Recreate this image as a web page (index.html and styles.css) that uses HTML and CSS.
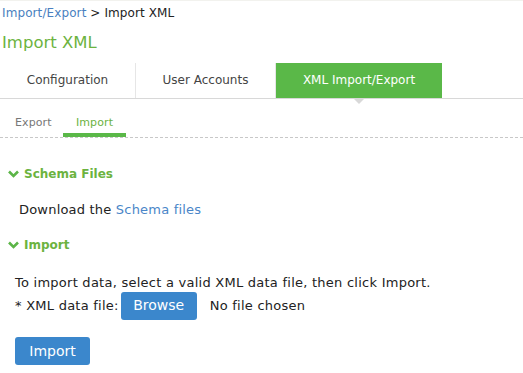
FILE: index.html
```html
<!DOCTYPE html>
<html>
<head>
<meta charset="utf-8">
<link rel="stylesheet" href="styles.css">
</head>
<body>
<div class="page">
  <div class="breadcrumb"><a class="crumb-link">Import/Export</a> &gt; Import XML</div>
  <h1 class="title">Import XML</h1>
  <div class="tabs">
    <div class="tab">Configuration</div>
    <div class="tab">User Accounts</div>
    <div class="tab active">XML Import/Export</div>
  </div>
  <div class="subtabs">
    <div class="subtab">Export</div>
    <div class="subtab active">Import</div>
  </div>
  <div class="section">
    <div class="section-head"><svg class="chev" width="11" height="8" viewBox="0 0 11 8"><path d="M1 1.5 L5.5 6 L10 1.5" fill="none" stroke="#5cb548" stroke-width="2.6"/></svg>Schema Files</div>
    <div class="section-body">Download the <a class="link">Schema files</a></div>
  </div>
  <div class="section">
    <div class="section-head second"><svg class="chev" width="11" height="8" viewBox="0 0 11 8"><path d="M1 1.5 L5.5 6 L10 1.5" fill="none" stroke="#5cb548" stroke-width="2.6"/></svg>Import</div>
    <div class="section-body import-body">
      <div class="para">To import data, select a valid XML data file, then click Import.</div>
      <div class="file-row"><span class="label">* XML data file:</span><span class="btn browse">Browse</span><span class="nofile">No file chosen</span></div>
      <div class="btn import">Import</div>
    </div>
  </div>
</div>
</body>
</html>
```

FILE: styles.css
```css
html, body { margin: 0; padding: 0; background: #fff; }
body { font-family: "DejaVu Sans", sans-serif; font-size: 13px; letter-spacing: 0.25px; color: #333; }
.page { width: 523px; height: 373px; overflow: hidden; padding-top: 3px; box-sizing: border-box; border-top: 1px solid #f2f2ee; }
.breadcrumb { padding-left: 2px; height: 18px; line-height: 18px; color: #222; font-size: 12px; letter-spacing: 0.1px; }
.crumb-link { color: #4a7fc0; }
.title { margin: 10px 0 0 0; padding-left: 2px; height: 22px; line-height: 22px; font-size: 16.5px; font-weight: normal; color: #6cb33f; letter-spacing: 0; }
.tabs { display: flex; border-bottom: 1px solid #d8d8d8; height: 35px; margin-top: 9px; }
.tab { width: 135px; text-align: center; line-height: 35px; color: #444; border-right: 1px solid #e6e6e6; font-size: 12px; letter-spacing: 0; }
.tab:nth-child(2) { width: 139px; }
.tab.active { width: 166px; background: #5ab848; color: #fff; border-right: 0; position: relative; }
.tab.active::after { content: ""; position: absolute; left: 77px; bottom: -6px; border-left: 6px solid transparent; border-right: 6px solid transparent; border-top: 6px solid #d8d8d8; }
.subtabs { display: flex; margin-top: 14px; padding-left: 15px; border-bottom: 1px dashed #c8c8c8; height: 24px; }
.subtab { width: 48px; line-height: 20px; color: #777; font-size: 11px; letter-spacing: 0.1px; }
.subtab.active { width: 63px; text-align: center; color: #6cb33f; border-bottom: 4px solid #5ab848; }
.section-head { font-weight: bold; font-size: 12px; color: #6cb33f; padding-left: 8px; display: flex; align-items: center; gap: 5px; margin-top: 27px; height: 18px; letter-spacing: 0; }
.section-head.second { margin-top: 17px; }
.chev { display: block; }
.section-body { padding-left: 19px; margin-top: 18px; color: #222; line-height: 18px; letter-spacing: 0.2px; }
.link { color: #4a86c8; }
.import-body { padding-left: 15px; margin-top: 21px; letter-spacing: 0.25px; }
.para { line-height: 16px; }
.file-row { display: flex; align-items: center; margin-top: 1px; height: 28px; }
.label { margin-right: 2px; }
.btn { background: #3b87cc; color: #fff; border-radius: 3px; font-size: 14px; text-align: center; letter-spacing: 0; }
.browse { width: 76px; height: 28px; line-height: 26px; }
.nofile { margin-left: 13px; }
.import { width: 75px; height: 28px; line-height: 28px; margin-top: 17px; }
```
